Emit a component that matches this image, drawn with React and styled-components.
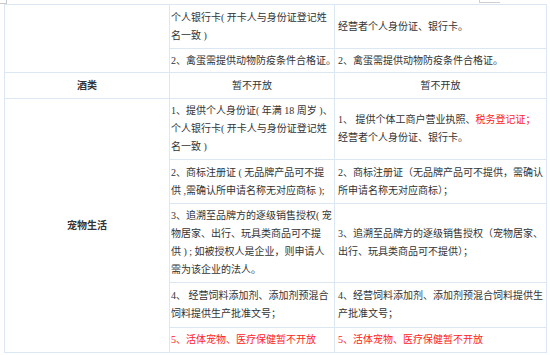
import React from "react";
import styled, { createGlobalStyle } from "styled-components";

const GlobalStyle = createGlobalStyle`
  html, body {
    margin: 0;
    padding: 0;
    background: #fff;
  }
  body {
    font-family: "Liberation Serif", "Noto Sans CJK SC", serif;
    color: #333;
  }
`;

const rows = [
  {
    h: 44,
    col2: ["个人银行卡( 开卡人与身份证登记姓", "名一致 )"],
    col3: ["经营者个人身份证、银行卡。"],
  },
  {
    h: 24,
    col2: ["2、禽蛋需提供动物防疫条件合格证。"],
    col3: ["2、禽蛋需提供动物防疫条件合格证。"],
  },
];

const petRows = [
  {
    h: 61,
    col2: ["1、提供个人身份证( 年满 18 周岁 )、", "个人银行卡( 开卡人与身份证登记姓", "名一致 )"],
    col3: [
      ["1、  提供个体工商户营业执照、", { red: "税务登记证；" }],
      "经营者个人身份证、银行卡。",
    ],
  },
  {
    h: 44,
    col2: ["2、商标注册证 ( 无品牌产品可不提", "供 ,需确认所申请名称无对应商标 );"],
    col3: ["2、商标注册证（无品牌产品可不提供，需确认", "所申请名称无对应商标）；"],
  },
  {
    h: 79,
    col2: [
      "3、追溯至品牌方的逐级销售授权( 宠",
      "物居家、出行、玩具类商品可不提",
      "供 ) ; 如被授权人是企业，则申请人",
      "需为该企业的法人。",
    ],
    col3: ["3、追溯至品牌方的逐级销售授权（宠物居家、", "出行、玩具类商品可不提供）；"],
  },
  {
    h: 45,
    col2: ["4、  经营饲料添加剂、添加剂预混合", "饲料提供生产批准文号；"],
    col3: ["4、经营饲料添加剂、添加剂预混合饲料提供生", "产批准文号；"],
  },
  {
    h: 25,
    red: true,
    col2: ["5、活体宠物、医疗保健暂不开放"],
    col3: ["5、活体宠物、医疗保健暂不开放"],
  },
];

const Lines = ({ lines }) =>
  lines.map((line, i) => (
    <Line key={i}>
      {Array.isArray(line)
        ? line.map((part, j) =>
            typeof part === "string" ? part : <Red key={j}>{part.red}</Red>
          )
        : line}
    </Line>
  ));

export default function App() {
  return (
    <>
      <GlobalStyle />
      <TopStrip>
        <CornerTab />
        <EdgeTab />
      </TopStrip>
      <Table>
        <colgroup>
          <col style={{ width: 165 }} />
          <col style={{ width: 165 }} />
          <col style={{ width: 212 }} />
        </colgroup>
        <tbody>
          {rows.map((r, i) => (
            <Row key={i} $h={r.h}>
              {i === 0 && <Cell rowSpan={2} />}
              <Cell $pad={1}>
                <Lines lines={r.col2} />
              </Cell>
              <Cell $pad={3}>
                <Lines lines={r.col3} />
              </Cell>
            </Row>
          ))}
          <Row $h={26}>
            <Cell $center $bold>酒类</Cell>
            <Cell $center>暂不开放</Cell>
            <Cell $center>暂不开放</Cell>
          </Row>
          {petRows.map((r, i) => (
            <Row key={i} $h={r.h}>
              {i === 0 && (
                <Cell rowSpan={petRows.length} $center $bold>
                  宠物生活
                </Cell>
              )}
              <Cell $pad={1} $red={r.red}>
                <Lines lines={r.col2} />
              </Cell>
              <Cell $pad={3} $red={r.red}>
                <Lines lines={r.col3} />
              </Cell>
            </Row>
          ))}
        </tbody>
      </Table>
    </>
  );
}

const TopStrip = styled.div`
  display: flex;
  height: 4px;
`;

const CornerTab = styled.div`
  box-sizing: border-box;
  width: 7px;
  height: 4px;
  border-right: 1px solid #c9c9c9;
  border-bottom: 1px solid #c9c9c9;
`;

const EdgeTab = styled.div`
  box-sizing: border-box;
  margin-left: 472px;
  width: 21px;
  height: 3px;
  border-left: 1px solid #cfcfcf;
  border-bottom: 1px solid #cfcfcf;
`;

const Table = styled.table`
  margin-left: 4px;
  width: 543px;
  border-collapse: collapse;
  table-layout: fixed;
  font-size: 10px;
`;

const Row = styled.tr`
  height: ${(p) => p.$h}px;
`;

const Cell = styled.td`
  border: 1px solid #dbe7f3;
  padding: 0 0 0 ${(p) => p.$pad || 0}px;
  vertical-align: middle;
  text-align: ${(p) => (p.$center ? "center" : "left")};
  font-weight: ${(p) => (p.$bold ? 700 : 400)};
  color: ${(p) => (p.$red ? "#f22" : "#333")};
  line-height: 18px;
  white-space: nowrap;
`;

const Line = styled.span`
  display: block;
`;

const Red = styled.span`
  color: #f22;
`;
